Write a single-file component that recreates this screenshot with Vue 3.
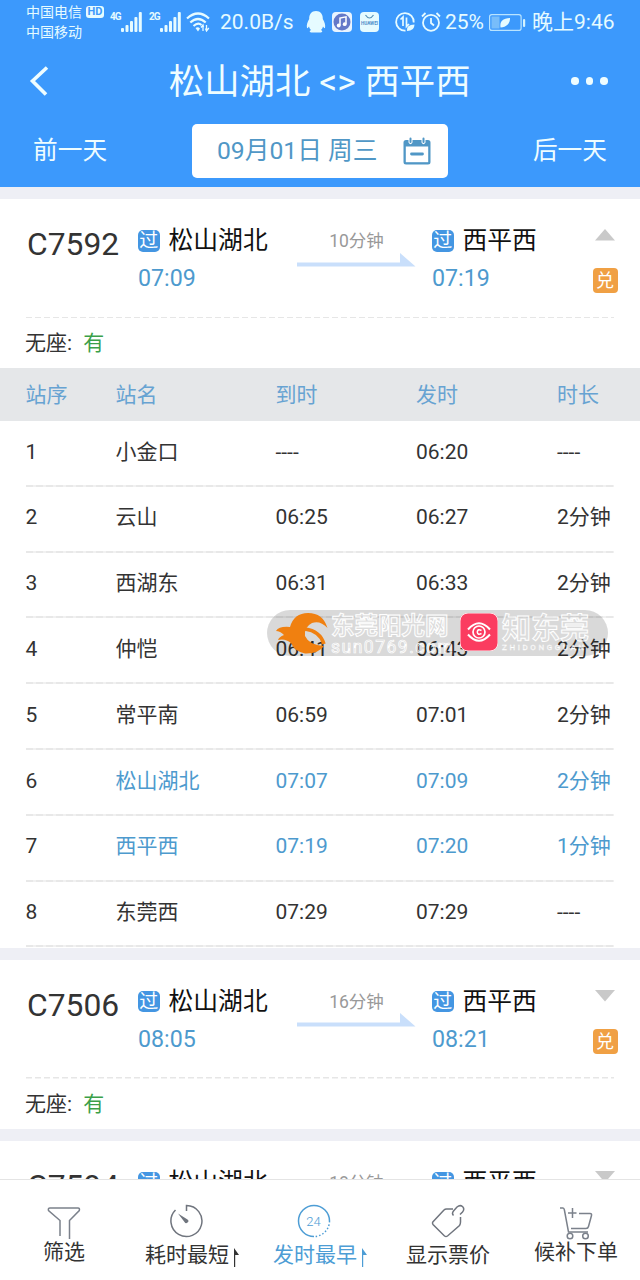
<script setup>
  import { ref } from "vue";

  const signals = ["4G", "2G"];

  const trains = ref([
    {
      no: "C7592",
      from: "松山湖北",
      to: "西平西",
      start: "07:09",
      end: "07:19",
      duration: "10分钟",
      open: true,
    },
    {
      no: "C7506",
      from: "松山湖北",
      to: "西平西",
      start: "08:05",
      end: "08:21",
      duration: "16分钟",
      open: false,
    },
    {
      no: "C7594",
      from: "松山湖北",
      to: "西平西",
      start: "08:25",
      end: "08:43",
      duration: "18分钟",
      open: false,
    },
  ]);

  const stops = [
    { name: "小金口", arrive: "----", depart: "06:20", stay: "----" },
    { name: "云山", arrive: "06:25", depart: "06:27", stay: "2分钟" },
    { name: "西湖东", arrive: "06:31", depart: "06:33", stay: "2分钟" },
    { name: "仲恺", arrive: "06:41", depart: "06:43", stay: "2分钟" },
    { name: "常平南", arrive: "06:59", depart: "07:01", stay: "2分钟" },
    { name: "松山湖北", arrive: "07:07", depart: "07:09", stay: "2分钟", active: true },
    { name: "西平西", arrive: "07:19", depart: "07:20", stay: "1分钟", active: true },
    { name: "东莞西", arrive: "07:29", depart: "07:29", stay: "----" },
  ];
</script>

<template>
  <div class="page">
    <header class="header">
      <div class="status">
        <div class="carriers">
          <div class="carrier">中国电信<span class="hd">HD</span></div>
          <div class="carrier">中国移动</div>
        </div>
        <div v-for="net in signals" :key="net" class="signal">
          <span class="net">{{ net }}</span>
          <svg width="21" height="20" viewBox="0 0 21 20" fill="#e6fbff">
            <rect x="0" y="16" width="3" height="4" rx="1" />
            <rect x="4.5" y="13" width="3" height="7" rx="1" />
            <rect x="9" y="9" width="3" height="11" rx="1" />
            <rect x="13.4" y="5" width="3" height="15" rx="1" />
            <rect x="17.8" y="0" width="3" height="20" rx="1" />
          </svg>
        </div>
        <svg class="wifi" width="24" height="20" viewBox="0 0 24 20" fill="none" stroke="#e6fbff" stroke-width="2.2">
          <path d="M1 6.5Q12 -3.5 23 6.5" />
          <path d="M4.3 10.5Q12 3.5 19.7 10.5" />
          <path d="M7.5 14Q12 10 15.5 13" />
          <path d="M9.5 16L12 19.5L14 16.5Q12 14.5 9.5 16Z" fill="#e6fbff" stroke="none" />
          <path d="M17 12.5V19M15 15.5L17 13L17.5 15M20.5 13V19M19.5 16.5L20.5 19L22.8 16" stroke-width="1.3" />
        </svg>
        <span class="speed">20.0B/s</span>
        <svg class="qq" width="20" height="22" viewBox="0 0 20 22" fill="#e6fbff">
          <path d="M10 0C5.5 0 3 3.5 3.2 8C1.5 11 .3 14 1 17C1.5 17.5 2.5 16.5 3 15.5C3.3 17 4 18 5 19C3 20 3.5 21.5 6 21.5H14C16.5 21.5 17 20 15 19C16 18 16.7 17 17 15.5C17.5 16.5 18.5 17.5 19 17C19.7 14 18.5 11 16.8 8C17 3.5 14.5 0 10 0Z" />
        </svg>
        <svg class="music" width="20" height="20" viewBox="0 0 20 20">
          <rect width="20" height="20" rx="4" fill="#e9f4ff" />
          <circle cx="10" cy="10" r="8.5" fill="#6579c8" />
          <path d="M8 13.5V6L14 4.8V12" fill="none" stroke="#fff" stroke-width="1.5" />
          <circle cx="6.7" cy="13.5" r="1.9" fill="#fff" />
          <circle cx="12.7" cy="12.2" r="1.9" fill="#fff" />
        </svg>
        <svg class="store" width="19" height="20" viewBox="0 0 19 20">
          <rect width="19" height="20" rx="4" fill="#e6fbff" />
          <path d="M5.5 3Q9.5 9 13.5 3" fill="none" stroke="#5590b5" stroke-width="1.2" />
          <text x="9.5" y="13.3" font-size="4.6" font-weight="700" text-anchor="middle" fill="#4f8fc9">HUAWEI</text>
        </svg>
        <svg class="saver" width="20" height="20" viewBox="0 0 20 20" fill="none" stroke="#e6fbff" stroke-width="1.8">
          <path d="M18.7 10.5A8.8 8.8 0 1 0 10.5 18.7" />
          <path d="M5.5 7.5L8 5V14M11.5 5.5V14.5L14 12" stroke-width="1.7" />
          <path d="M12 19Q11 12.5 19.5 12.5Q19.5 19 12 19Z" fill="#e6fbff" stroke="none" />
        </svg>
        <svg class="alarm" width="20" height="20" viewBox="0 0 20 20" fill="none" stroke="#e6fbff" stroke-width="1.8">
          <circle cx="10" cy="10.8" r="8" />
          <path d="M10 6V11L13 13.5M1 4.5L4.5 1M19 4.5L15.5 1" />
        </svg>
        <span class="percent">25%</span>
        <svg class="battery" width="37" height="17" viewBox="0 0 37 17">
          <rect x=".6" y=".6" width="31.5" height="15.8" rx="2.2" fill="none" stroke="#b9e4ff" stroke-width="1.2" />
          <rect x="2.5" y="2.5" width="8" height="12" fill="#78bdfa" />
          <path d="M11.5 13.5C10.5 7 14 4.5 21 4C21 10 17.5 13 11.5 13.5Z" fill="#e6fbff" />
          <rect x="34" y="5" width="2.2" height="8" rx="1" fill="#d3f2ff" />
        </svg>
        <span class="clock">晚上9:46</span>
      </div>

      <div class="title-bar">
        <svg width="20" height="30" viewBox="0 0 20 30" fill="none" stroke="#effdff" stroke-width="3.6">
          <path d="M18 1.5L3.5 15L17 28.5" />
        </svg>
        <h1 class="title">松山湖北 &lt;&gt; 西平西</h1>
        <div class="more"><i></i><i></i><i></i></div>
      </div>

      <div class="date-bar">
        <span>前一天</span>
        <div class="date">
          <span>09月01日 周三</span>
          <svg width="28" height="28" viewBox="0 0 28 28">
            <path d="M3 3H5.5V5.5Q7.5 9 9.5 5.5V3H18.5V5.5Q20.5 9 22.5 5.5V3H25Q27.5 3 27.5 5.5V25Q27.5 27.5 25 27.5H3Q.5 27.5 .5 25V5.5Q.5 3 3 3Z" fill="#5097c6" />
            <rect x="2.8" y="9.5" width="22.4" height="15.7" fill="#fff" />
            <path d="M7.5 1.5V5M20.5 1.5V5" stroke="#5097c6" stroke-width="2" stroke-linecap="round" />
            <path d="M8.5 17H19.5" stroke="#5097c6" stroke-width="2.8" stroke-linecap="round" />
          </svg>
        </div>
        <span>后一天</span>
      </div>
    </header>

    <main class="list">
      <section v-for="train in trains" :key="train.no" class="card">
        <div class="train" @click="train.open = !train.open">
          <div class="no">{{ train.no }}</div>
          <div class="station from">
            <div class="name"><span class="pass">过</span>{{ train.from }}</div>
            <div class="time">{{ train.start }}</div>
          </div>
          <div class="duration">
            <span>{{ train.duration }}</span>
            <svg width="119" height="14" viewBox="0 0 119 14" fill="#c9dffb">
              <path d="M0 9.5H103V0L118.5 13.5H0Z" />
            </svg>
          </div>
          <div class="station to">
            <div class="name"><span class="pass">过</span>{{ train.to }}</div>
            <div class="time">{{ train.end }}</div>
          </div>
          <div class="side">
            <svg width="20" height="12" viewBox="0 0 20 12" fill="#c9c9c9">
              <path v-if="train.open" d="M10 0L20 11.5H0Z" />
              <path v-else d="M0 0H20L10 11.5Z" />
            </svg>
            <span class="exchange">兑</span>
          </div>
        </div>
        <div class="seat">无座: <span class="has">有</span></div>

        <div v-if="train.open" class="stops">
          <div class="row head">
            <span>站序</span>
            <span>站名</span>
            <span>到时</span>
            <span>发时</span>
            <span>时长</span>
          </div>
          <div v-for="(stop, index) in stops" :key="stop.name" class="row" :class="{ active: stop.active }">
            <span class="index">{{ index + 1 }}</span>
            <span>{{ stop.name }}</span>
            <span>{{ stop.arrive }}</span>
            <span>{{ stop.depart }}</span>
            <span>{{ stop.stay }}</span>
          </div>
        </div>
      </section>
    </main>

    <div class="watermark">
      <svg class="sun" width="54" height="42" viewBox="0 0 54 42">
        <path d="M0 18Q3 13 14 14Q18 0 32 0Q47 0 51.5 15Q44 7 36 10Q28 14 29 23Q33 32 48 33Q42 41 29 40.5Q18 38 15 30Q9 25 2 27Q3 24 8 22Q4 18 0 18Z" fill="#f08010" />
        <path d="M29 16Q44 18 48 31" fill="none" stroke="#f08010" stroke-width="3.5" />
      </svg>
      <div class="site">
        <b>东莞阳光网</b>
        <small>sun0769.com</small>
      </div>
      <svg class="eye" width="38" height="38" viewBox="0 0 38 38" fill="none" stroke="#fff" stroke-width="2">
        <rect width="38" height="38" rx="8" fill="#fb3c60" stroke="#ffe3e8" stroke-width="1" />
        <path d="M8 16.5Q19 4 30 16.5M8 21.5Q19 34 30 21.5" />
        <circle cx="19" cy="19" r="6" stroke-width="1.7" />
        <path d="M21.5 17.5Q17.5 15.5 17.3 19Q17.5 22.5 21.5 20.5" stroke-width="1.6" />
      </svg>
      <div class="brand">
        <b>知东莞</b>
        <small>ZHIDONGGUAN</small>
      </div>
    </div>

    <footer class="tabs">
      <div class="tab">
        <svg width="34" height="34" viewBox="0 0 34 34" fill="none" stroke="#7b818b" stroke-width="1.5">
          <path d="M13 30V14.5L1.5 4.5Q.8 2 3 2H31Q33 2 32.3 4.5L22.5 14.5V33" />
        </svg>
        <span>筛选</span>
      </div>
      <div class="tab low sortable">
        <svg width="34" height="34" viewBox="0 0 34 34" fill="none" stroke="#70757e" stroke-width="1.5">
          <path d="M17.5 7V1.5A15.5 15.5 0 1 1 6.5 6" />
          <path d="M9 9.5L18.5 15.5A2 2 0 1 1 15.5 18Z" fill="#70757e" stroke="none" />
        </svg>
        <span>耗时最短<svg class="sort" width="5" height="19" viewBox="0 0 5 19" fill="currentColor"><path d="M0 0L5 7H1.2V19H0Z" /></svg></span>
      </div>
      <div class="tab low sortable current">
        <svg width="34" height="34" viewBox="0 0 34 34" fill="none" stroke="#4d9dd5" stroke-width="1.5">
          <path d="M17 32.5A15.5 15.5 0 1 1 32.5 17" />
          <path d="M32.5 17A15.5 15.5 0 0 1 17 32.5" stroke-dasharray="1.5 2" />
          <text x="16.5" y="21.5" font-size="13" font-weight="300" text-anchor="middle" fill="#4d9dd5" stroke="none">24</text>
        </svg>
        <span>发时最早<svg class="sort" width="5" height="19" viewBox="0 0 5 19" fill="currentColor"><path d="M0 0L5 7H1.2V19H0Z" /></svg></span>
      </div>
      <div class="tab low">
        <svg width="34" height="34" viewBox="0 0 34 34" fill="none" stroke="#70757e" stroke-width="1.5">
          <path d="M22 5H15.5Q14 5 13 6L1.8 18Q1 19 2 20.5L13.5 32Q15 33 16.5 32L28.5 21.5Q29.5 20 29.5 18V13" />
          <path d="M22.5 11.5Q20.5 9.5 22.5 7L26 3Q29 .5 31.5 2.5Q34 5 31.5 8L29 10.5" />
        </svg>
        <span>显示票价</span>
      </div>
      <div class="tab">
        <svg width="34" height="34" viewBox="0 0 34 34" fill="none" stroke="#7b818b" stroke-width="1.5">
          <path d="M1 2H4Q5 2 5.4 4L9.5 26H29" />
          <path d="M20 7.5H31Q33 7.5 32.5 9.5L29.5 20.5Q29 22.5 27 22.5H12M9 7H17.5M13.5 2V12" />
          <circle cx="11" cy="30" r="2.8" />
          <circle cx="26.5" cy="30" r="2.8" />
        </svg>
        <span>候补下单</span>
      </div>
    </footer>
  </div>
</template>

<style>
  body {
    margin: 0;
    overflow: hidden;
  }
</style>

<style scoped>
  .page {
    position: relative;
    display: flex;
    flex-direction: column;
    width: 640px;
    height: 1280px;
    overflow: hidden;
    background: #eeeff5;
    color: #333;
    font-family: Roboto, "Noto Sans CJK SC", sans-serif;
    font-size: 21px;
    line-height: 1;
    white-space: nowrap;
  }

  svg {
    display: block;
    flex: none;
  }

  .header {
    flex: none;
    height: 187px;
    background: #3c99fc;
    color: #effdff;
  }

  .status {
    display: flex;
    align-items: center;
    height: 44px;
    padding-left: 26px;
    color: #e6fbff;
  }

  .carriers {
    width: 84px;
    font-size: 14px;
  }

  .carrier {
    display: flex;
    align-items: center;
    height: 20px;
  }

  .hd {
    width: 18px;
    height: 12px;
    margin-left: 4px;
    border-radius: 3px;
    background: #e6fbff;
    color: #3c99fc;
    font-size: 11px;
    font-weight: 700;
    line-height: 12px;
    text-align: center;
  }

  .signal {
    display: flex;
    width: 39px;
  }

  .net {
    width: 11px;
    font-size: 10px;
    font-weight: 700;
    letter-spacing: -1px;
  }

  .wifi {
    margin-right: 10px;
    margin-left: -2px;
  }

  .speed {
    width: 86px;
    padding-top: 1px;
    font-size: 21px;
  }

  .music {
    margin: 0 8px 0 6px;
  }

  .saver {
    margin: 0 6px 0 16px;
  }

  .percent {
    width: 44px;
    margin-left: 4px;
    padding-top: 1px;
    font-size: 21px;
  }

  .clock {
    margin-left: 6px;
    padding-top: 1px;
  }

  .title-bar {
    display: flex;
    align-items: center;
    justify-content: space-between;
    height: 74px;
    padding: 0 32px 0 29px;
  }

  .title {
    margin: 4px 0 0 19px;
    font-size: 35.4px;
    font-weight: 400;
  }

  .more {
    display: flex;
    gap: 7px;
  }

  .more i {
    width: 7.5px;
    height: 7.5px;
    border-radius: 50%;
    background: #effdff;
  }

  .date-bar {
    display: flex;
    align-items: center;
    justify-content: space-between;
    padding: 6px 33px 0;
    font-size: 24.7px;
  }

  .date {
    display: flex;
    align-items: center;
    justify-content: space-between;
    box-sizing: border-box;
    width: 256px;
    height: 54px;
    padding: 0 17px 0 25px;
    border-radius: 5px;
    background: #fff;
    color: #5097c6;
  }

  .list {
    flex: 1;
    min-height: 0;
    overflow: hidden;
  }

  .card {
    margin-top: 12px;
    padding-bottom: 0.3px;
    background: #fff;
  }

  .train {
    display: flex;
    box-sizing: border-box;
    height: 119px;
    margin: 0 26px;
    background: repeating-linear-gradient(90deg, #e6e6e6 0 6px, transparent 6px 9px) bottom / 100% 1.5px no-repeat;
  }

  .no {
    width: 111px;
    margin-left: 1px;
    padding-top: 30px;
    font-size: 31.8px;
  }

  .station {
    padding-top: 30px;
  }

  .from {
    width: 159px;
  }

  .to {
    width: 160px;
  }

  .name {
    display: flex;
    align-items: center;
    height: 25px;
    color: #111;
    font-size: 24.8px;
  }

  .pass {
    width: 21.5px;
    height: 21.5px;
    margin-top: -1px;
    margin-right: 9px;
    border-radius: 5px;
    background: #4496e2;
    color: #fff;
    font-size: 19px;
    line-height: 21.5px;
    text-align: center;
  }

  .time {
    margin-top: 13px;
    color: #4d9ace;
    font-size: 23.2px;
  }

  .duration {
    display: flex;
    flex: none;
    flex-direction: column;
    align-items: center;
    width: 119px;
    margin-right: 16px;
    padding-top: 34px;
    color: #999;
    font-size: 17.5px;
  }

  .duration svg {
    margin-top: 2px;
  }

  .no,
  .station {
    flex: none;
  }

  .side {
    display: flex;
    flex: none;
    flex-direction: column;
    align-items: center;
    width: 25px;
    padding-top: 30px;
  }

  .exchange {
    width: 25px;
    height: 25px;
    margin-top: 27px;
    margin-left: 1px;
    border-radius: 4px;
    background: #f0a044;
    color: #fff;
    font-size: 18px;
    line-height: 25px;
    text-align: center;
  }

  .seat {
    height: 50px;
    padding-left: 25px;
    line-height: 51px;
  }

  .has {
    margin-left: 6px;
    color: #3b9f49;
  }

  .row {
    display: grid;
    grid-template-columns: 90px 160px 140.5px 141px 1fr;
    align-items: center;
    box-sizing: border-box;
    height: 65.8px;
    margin-left: 25.5px;
    margin-right: 26px;
    padding-bottom: 3.5px;
    background: repeating-linear-gradient(90deg, #e8e8e8 0 7px, #f1f1f1 7px 10px) bottom / 100% 2px no-repeat;
  }

  .head {
    height: 53px;
    margin: 0;
    padding: 2px 26px 0 25.5px;
    background: #e5e7e9;
    color: #67a3d2;
  }

  .active {
    color: #4d9ace;
  }

  .active .index {
    color: #333;
  }

  .watermark {
    position: absolute;
    top: 610px;
    left: 267px;
    display: flex;
    box-sizing: border-box;
    width: 341px;
    height: 46px;
    padding: 3px 0 0 9px;
    border-radius: 23px;
    background: rgba(0, 0, 0, 0.15);
    color: rgba(225, 225, 225, 0.4);
    -webkit-text-stroke: 1px #fff;
  }

  .watermark b,
  .watermark small {
    display: block;
  }

  .site {
    width: 121px;
    margin-left: 1px;
    padding-top: 2px;
    font-size: 23.5px;
  }

  .site small {
    font-size: 17.5px;
    letter-spacing: 1.5px;
    -webkit-text-stroke: 0.7px #fff;
  }

  .eye {
    margin: 0 4px 0 8px;
  }

  .brand {
    padding-top: 2px;
    font-size: 29px;
  }

  .brand small {
    font-size: 8px;
    letter-spacing: 2.6px;
    -webkit-text-stroke: 0.4px #fff;
  }

  .tabs {
    display: flex;
    flex: none;
    box-sizing: border-box;
    height: 101px;
    padding-top: 26px;
    border-top: 1px solid #e4e4e4;
    background: #fff;
  }

  .tab {
    display: flex;
    flex: 1;
    flex-direction: column;
    align-items: center;
    color: #333;
  }

  .tab > span {
    display: flex;
    align-items: center;
    height: 24px;
  }

  .low > svg {
    margin-top: -2px;
  }

  .low > span {
    margin-top: 5px;
  }

  .sortable > svg {
    margin-right: 12px;
  }

  .sort {
    margin-top: 4px;
    margin-left: 5px;
  }

  .current {
    color: #4d9dd5;
  }
</style>
